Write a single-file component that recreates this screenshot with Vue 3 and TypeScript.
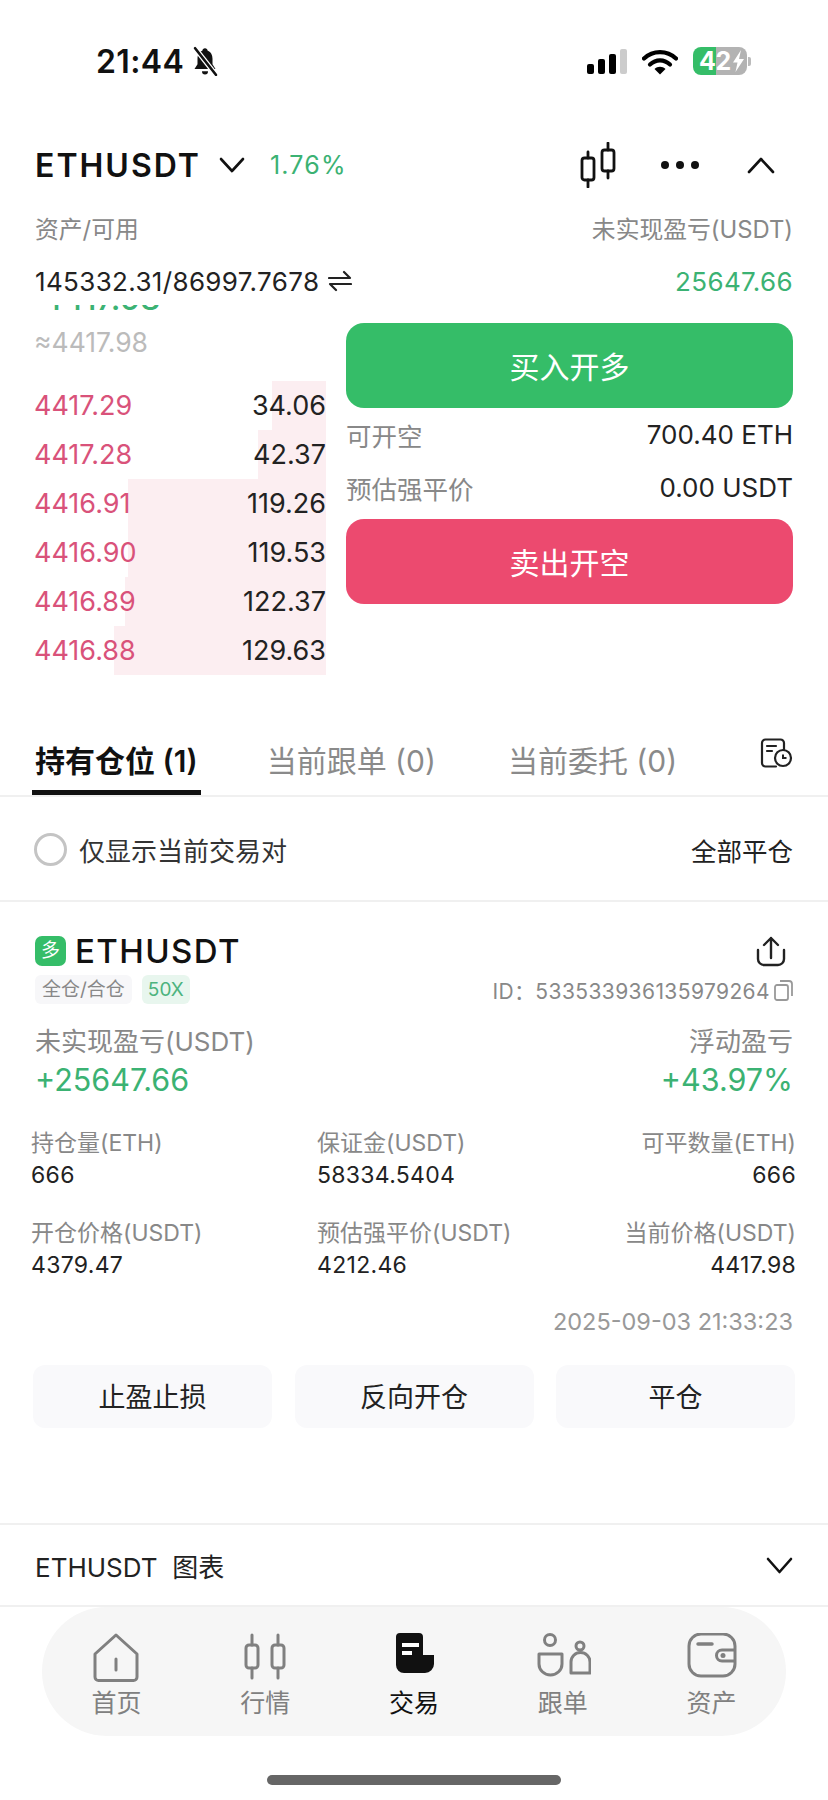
<script setup lang="ts">
interface Level {
  price: string;
  size: string;
  depth: number;
}

interface Metric {
  label: string;
  value: string;
}

const levels: Level[] = [
  { price: "4417.29", size: "34.06", depth: 54 },
  { price: "4417.28", size: "42.37", depth: 68 },
  { price: "4416.91", size: "119.26", depth: 198 },
  { price: "4416.90", size: "119.53", depth: 198 },
  { price: "4416.89", size: "122.37", depth: 201 },
  { price: "4416.88", size: "129.63", depth: 212 },
];

const metrics: Metric[] = [
  { label: "持仓量(ETH)", value: "666" },
  { label: "保证金(USDT)", value: "58334.5404" },
  { label: "可平数量(ETH)", value: "666" },
  { label: "开仓价格(USDT)", value: "4379.47" },
  { label: "预估强平价(USDT)", value: "4212.46" },
  { label: "当前价格(USDT)", value: "4417.98" },
];

const actions = ["止盈止损", "反向开仓", "平仓"];

const navItems = [
  { key: "home", label: "首页" },
  { key: "market", label: "行情" },
  { key: "trade", label: "交易" },
  { key: "copy", label: "跟单" },
  { key: "assets", label: "资产" },
];
</script>

<template>
  <div class="page">
    <div class="status">
      <div class="status-left">
        <span class="time">21:44</span>
        <svg class="bell" width="28" height="30" viewBox="0 0 28 28" preserveAspectRatio="none">
          <path d="M14 2c-1.500 0-2.500 1-2.700 2.500C8 5.500 6.500 8.500 6.500 12v5L3.500 21.500h21L21.500 17v-5c0-3.500-1.500-6.500-4.800-7.500C16.500 3 15.500 2 14 2z" fill="#111" />
          <path d="M11 23.500h6a3 3 0 0 1-6 0z" fill="#111" />
          <path d="M4 2l21 25" stroke="#fff" stroke-width="5" />
          <path d="M4 2l21 25" stroke="#111" stroke-width="2.400" stroke-linecap="round" />
        </svg>
      </div>
      <div class="status-right">
        <div class="signal">
          <i style="height: 10px"></i>
          <i style="height: 15px"></i>
          <i style="height: 20px"></i>
          <i class="off" style="height: 25px"></i>
        </div>
        <svg width="36" height="27" viewBox="0 0 36 27">
          <path d="M2 10.500C11 2 25 2 34 10.500" fill="none" stroke="#000" stroke-width="4.200" stroke-linecap="round" />
          <path d="M8 16.500c6-5.500 14-5.500 20 0" fill="none" stroke="#000" stroke-width="4.200" stroke-linecap="round" />
          <path d="M12.500 21L18 26.500 23.500 21c-3-3-8-3-11 0z" fill="#000" />
        </svg>
        <div class="battery">
          <span class="battery-level">42</span>
          <svg width="13" height="22" viewBox="0 0 13 22"><path d="M9 0L1 12.500h4.500L3.500 22 12 9H7z" fill="#fff" /></svg>
        </div>
        <span class="battery-cap"></span>
      </div>
    </div>

    <div class="head">
      <span class="symbol">ETHUSDT</span>
      <svg class="symbol-arrow" width="26" height="16" viewBox="0 0 26 16">
        <path d="M2 2l11 12L24 2" fill="none" stroke="#111" stroke-width="2.600" stroke-linecap="round" stroke-linejoin="round" />
      </svg>
      <span class="change">1.76%</span>
      <svg class="candle" width="36" height="46" viewBox="0 0 36 46">
        <g fill="none" stroke="#111" stroke-width="2.800" stroke-linecap="round">
          <path d="M8 10v6M8 38v7M28 1v7M28 29v7" />
          <rect x="2" y="16" width="12" height="22" rx="2.500" />
          <rect x="22" y="8" width="12" height="21" rx="2.500" />
        </g>
      </svg>
      <div class="dots"><i></i><i></i><i></i></div>
      <svg width="28" height="17" viewBox="0 0 28 17">
        <path d="M2 15L14 2l12 13" fill="none" stroke="#111" stroke-width="2.600" stroke-linecap="round" stroke-linejoin="round" />
      </svg>
    </div>

    <div class="account">
      <div class="account-row label">
        <span>资产/可用</span>
        <span>未实现盈亏(USDT)</span>
      </div>
      <div class="account-row values">
        <span class="balance">
          145332.31/86997.7678
          <svg width="24" height="22" viewBox="0 0 24 22">
            <path d="M1 8h21l-6-6M23 14H2l6 6" fill="none" stroke="#222" stroke-width="2.200" stroke-linecap="round" stroke-linejoin="round" />
          </svg>
        </span>
        <span class="green">25647.66</span>
      </div>
    </div>

    <div class="body">
      <div class="book">
        <div class="last-price"><span>4417.98</span></div>
        <div class="index-price">≈4417.98</div>
        <div v-for="level in levels" :key="level.price" class="level">
          <span class="depth" :style="{ width: level.depth + 'px' }"></span>
          <span class="level-price">{{ level.price }}</span>
          <span class="level-size">{{ level.size }}</span>
        </div>
      </div>
      <div class="order">
        <button class="order-btn buy">买入开多</button>
        <div class="order-info">
          <div class="order-row"><span>可开空</span><b>700.40 ETH</b></div>
          <div class="order-row"><span>预估强平价</span><b>0.00 USDT</b></div>
        </div>
        <button class="order-btn sell">卖出开空</button>
      </div>
    </div>

    <div class="tabs">
      <span class="tab active">持有仓位 (1)</span>
      <span class="tab">当前跟单 (0)</span>
      <span class="tab">当前委托 (0)</span>
      <svg class="history" width="33" height="30" viewBox="0 0 33 30">
        <path d="M24 12V5a3.500 3.500 0 0 0-3.500-3.500h-15A3.500 3.500 0 0 0 2 5v20a3.500 3.500 0 0 0 3.500 3.500H16" fill="none" stroke="#222" stroke-width="2.200" stroke-linecap="round" />
        <path d="M7 8h9M7 13h5" stroke="#222" stroke-width="2.200" stroke-linecap="round" />
        <circle cx="23" cy="20" r="8" fill="#fff" stroke="#222" stroke-width="2.200" />
        <path d="M23 16.500V20h3.500" fill="none" stroke="#222" stroke-width="2" />
      </svg>
    </div>

    <div class="filter">
      <span class="radio"></span>
      <span class="filter-text">仅显示当前交易对</span>
      <span class="close-all">全部平仓</span>
    </div>

    <div class="position">
      <div class="pos-title">
        <span class="side">多</span>
        <span class="pos-symbol">ETHUSDT</span>
        <svg class="share" width="30" height="31" viewBox="0 0 30 31">
          <path d="M15 2v20M8 9l7-7 7 7" fill="none" stroke="#222" stroke-width="2.400" stroke-linecap="round" stroke-linejoin="round" />
          <path d="M2 14v9a6 6 0 0 0 6 6h14a6 6 0 0 0 6-6v-9" fill="none" stroke="#222" stroke-width="2.400" stroke-linecap="round" />
        </svg>
      </div>
      <div class="pos-tags">
        <span class="tag">全仓/合仓</span>
        <span class="tag lev">50X</span>
        <span class="pos-id">ID：533533936135979264</span>
        <svg width="19" height="22" viewBox="0 0 19 22">
          <rect x="1" y="6" width="13" height="15" rx="2" fill="none" stroke="#999" stroke-width="1.800" />
          <path d="M6 2h9a3 3 0 0 1 3 3v12" fill="none" stroke="#999" stroke-width="1.800" />
        </svg>
      </div>

      <div class="pnl">
        <div>
          <div class="pnl-label">未实现盈亏(USDT)</div>
          <div class="pnl-value">+25647.66</div>
        </div>
        <div class="right">
          <div class="pnl-label">浮动盈亏</div>
          <div class="pnl-value">+43.97%</div>
        </div>
      </div>

      <div class="metrics">
        <div v-for="m in metrics" :key="m.label" class="metric">
          <div class="metric-label">{{ m.label }}</div>
          <div class="metric-value">{{ m.value }}</div>
        </div>
      </div>

      <div class="opened">2025-09-03 21:33:23</div>

      <div class="actions">
        <button v-for="a in actions" :key="a" class="action">{{ a }}</button>
      </div>
    </div>

    <div class="chart-row">
      <span class="chart-title">ETHUSDT&nbsp;&nbsp;图表</span>
      <svg width="27" height="17" viewBox="0 0 27 17">
        <path d="M2 2l11.500 13L25 2" fill="none" stroke="#111" stroke-width="2.600" stroke-linecap="round" stroke-linejoin="round" />
      </svg>
    </div>

    <div class="nav">
      <div v-for="item in navItems" :key="item.key" class="nav-item" :class="{ current: item.key === 'trade' }">
        <svg v-if="item.key === 'home'" width="56" height="50" viewBox="0 0 56 50">
          <path d="M28 2L49 21V44a3.500 3.500 0 0 1-3.500 3.500h-35A3.500 3.500 0 0 1 7 44V21z" fill="none" stroke="#808080" stroke-width="3" stroke-linejoin="round" />
          <path d="M28 26v11" stroke="#808080" stroke-width="3" stroke-linecap="round" />
        </svg>
        <svg v-else-if="item.key === 'market'" width="56" height="50" viewBox="0 0 56 50">
          <g fill="none" stroke="#808080" stroke-width="3" stroke-linecap="round">
            <path d="M15 2v10M15 35v10M41 2v10M41 35v10" />
            <rect x="9" y="12" width="12" height="23" rx="3" />
            <rect x="35" y="12" width="12" height="23" rx="3" />
          </g>
        </svg>
        <svg v-else-if="item.key === 'trade'" width="56" height="50" viewBox="0 0 56 50">
          <path d="M14 0H33a4 4 0 0 1 4 4V22H48V31a9 9 0 0 1-9 9H18a8 8 0 0 1-8-8V4a4 4 0 0 1 4-4z" fill="#111" />
          <path d="M16 10h17v4H16zM16 18h10v4H16z" fill="#fff" />
        </svg>
        <svg v-else-if="item.key === 'copy'" width="56" height="50" viewBox="0 0 56 50">
          <g fill="none" stroke="#808080" stroke-width="3" stroke-linejoin="round">
            <circle cx="15" cy="7" r="5.500" />
            <path d="M4 21H27V31A11.500 11 0 0 1 4 31z" />
            <circle cx="45" cy="13" r="4" />
            <path d="M36 40V29a9.500 9.500 0 0 1 19 0V40z" />
          </g>
        </svg>
        <svg v-else width="56" height="50" viewBox="0 0 56 50">
          <rect x="5" y="1" width="46" height="42" rx="12" fill="none" stroke="#808080" stroke-width="3" />
          <path d="M14 11h14" stroke="#808080" stroke-width="3.500" stroke-linecap="round" />
          <path d="M51 17H38a5.500 5.500 0 0 0 0 11H51" fill="none" stroke="#808080" stroke-width="3" />
          <circle cx="39" cy="22.500" r="2.500" fill="#808080" />
        </svg>
        <span class="nav-label">{{ item.label }}</span>
      </div>
    </div>

    <div class="home-bar"></div>
  </div>
</template>

<style>
body {
  background: #fff;
}
</style>

<style scoped>
.page {
  width: 828px;
  height: 1800px;
  overflow: hidden;
  background: #fff;
  color: #222;
  font-family: Inter, "Noto Sans CJK SC", sans-serif;
}

.status {
  height: 122px;
  display: flex;
  align-items: center;
  justify-content: space-between;
  padding: 0 77px 0 96px;
  box-sizing: border-box;
}

.status-left,
.status-right {
  display: flex;
  align-items: center;
}

.time {
  font-size: 32px;
  font-weight: 600;
  color: #111;
  letter-spacing: 0.4px;
}

.bell {
  margin-left: 7px;
}

.signal {
  display: flex;
  align-items: flex-end;
  gap: 4px;
  margin-right: 15px;
}

.signal i {
  display: block;
  width: 7px;
  border-radius: 2px;
  background: #000;
}

.signal i.off {
  background: #ccc;
}

.battery {
  width: 54px;
  height: 28px;
  margin-left: 15px;
  padding-left: 6px;
  box-sizing: border-box;
  border-radius: 8px;
  background: linear-gradient(90deg, #35bd68 43%, #b3b3b3 43%);
  color: #fff;
  font-size: 25px;
  font-weight: 700;
  line-height: 28px;
  display: flex;
  align-items: center;
  gap: 1px;
}

.battery-level {
  letter-spacing: -0.5px;
}

.battery-cap {
  width: 3px;
  height: 9px;
  margin-left: 1px;
  border-radius: 0 2px 2px 0;
  background: #bbb;
}

.head {
  height: 86px;
  display: flex;
  align-items: center;
  padding: 0 53px 0 35px;
}

.symbol {
  font-size: 32px;
  font-weight: 600;
  color: #111;
  letter-spacing: 2px;
}

.symbol-arrow {
  margin-left: 18px;
}

.change {
  margin-left: 25px;
  font-size: 25px;
  letter-spacing: 1.200px;
  color: #3bb273;
}

.candle {
  margin-left: auto;
}

.dots {
  display: flex;
  gap: 7px;
  margin: 0 48px 0 45px;
}

.dots i {
  width: 8px;
  height: 8px;
  border-radius: 50%;
  background: #111;
}

.account {
  padding: 0 35px;
}

.account-row {
  display: flex;
  justify-content: space-between;
  align-items: center;
}

.account-row.label {
  height: 30px;
  margin-top: 4px;
  font-size: 23.800px;
  color: #888;
}

.account-row.values {
  height: 40px;
  margin-top: 19px;
  font-size: 26px;
  letter-spacing: 0.350px;
}

.balance {
  display: flex;
  align-items: center;
  gap: 9px;
}

.green {
  color: #3bb273;
}

.body {
  display: flex;
  height: 375px;
  padding: 0 35px 0 0;
}

.book {
  width: 346px;
  flex: none;
  box-sizing: border-box;
  padding: 0 20px 0 34px;
}

.last-price {
  height: 6px;
  margin-top: 4px;
  overflow: hidden;
  display: flex;
  align-items: flex-end;
  padding-left: 8px;
  color: #3bb273;
  font-size: 32px;
  font-weight: 500;
  line-height: 24px;
}

.index-price {
  height: 70px;
  padding-top: 17px;
  box-sizing: border-box;
  font-size: 26.500px;
  line-height: 28px;
  color: #bbb;
}

.level {
  position: relative;
  height: 49px;
  display: flex;
  align-items: center;
  justify-content: space-between;
  font-size: 27px;
}

.depth {
  position: absolute;
  top: 0;
  right: 0;
  bottom: 0;
  background: #fceef1;
}

.level-price {
  position: relative;
  color: #d9527a;
}

.level-size {
  position: relative;
  color: #222;
}

.order {
  flex: 1;
  padding-top: 22px;
}

.order-btn {
  display: block;
  width: 100%;
  height: 85px;
  padding-bottom: 3px;
  border: none;
  border-radius: 18px;
  color: #fff;
  font-family: inherit;
  font-size: 30px;
}

.buy {
  background: #35bd68;
}

.sell {
  background: #ec4a6f;
}

.order-info {
  padding: 0 0 5px;
}

.order-row {
  height: 53px;
  display: flex;
  align-items: center;
  justify-content: space-between;
  font-size: 25.500px;
  color: #888;
}

.order-row b {
  font-weight: 400;
  font-size: 26px;
  color: #222;
}

.tabs {
  height: 121px;
  box-sizing: border-box;
  padding: 50px 35px 0 32px;
  display: flex;
  align-items: flex-start;
  border-bottom: 2px solid #f0f0f0;
}

.tab {
  height: 69px;
  padding: 13px 3px 0;
  margin-right: 63px;
  box-sizing: border-box;
  line-height: 44px;
  font-size: 30px;
  color: #8a8a8a;
}

.tab:nth-child(2) {
  margin-right: 66px;
}

.tab.active {
  color: #111;
  font-weight: 600;
  border-bottom: 5px solid #111;
}

.history {
  margin-left: auto;
  margin-top: 12px;
}

.filter {
  height: 105px;
  box-sizing: border-box;
  padding: 1px 35px 0 34px;
  display: flex;
  align-items: center;
  border-bottom: 2px solid #f0f0f0;
}

.radio {
  width: 33px;
  height: 33px;
  box-sizing: border-box;
  border: 3px solid #c4c4c4;
  border-radius: 50%;
}

.filter-text {
  margin-left: 12px;
  font-size: 26px;
  color: #333;
}

.close-all {
  margin-left: auto;
  font-size: 25.500px;
  color: #222;
}

.position {
  padding: 34px 35px 0 35px;
}

.pos-title {
  height: 30px;
  display: flex;
  align-items: center;
}

.side {
  width: 31px;
  height: 30px;
  border-radius: 7px;
  background: #35bd68;
  color: #fff;
  font-size: 19px;
  line-height: 30px;
  text-align: center;
}

.pos-symbol {
  margin-left: 9px;
  font-size: 33px;
  font-weight: 500;
  color: #111;
  letter-spacing: 1.400px;
}

.share {
  margin-left: auto;
  margin-right: 7px;
}

.pos-tags {
  height: 29px;
  margin-top: 9px;
  display: flex;
  align-items: center;
}

.tag {
  height: 29px;
  line-height: 29px;
  padding: 0 7px;
  border-radius: 6px;
  background: #f7f7f9;
  color: #888;
  font-size: 19px;
}

.tag.lev {
  margin-left: 10px;
  padding: 0 6px;
  background: #e8f6ee;
  color: #4db37e;
}

.pos-id {
  margin-left: auto;
  margin-right: 4px;
  font-size: 21px;
  letter-spacing: 0.4px;
  color: #888;
}

.pnl {
  display: flex;
  justify-content: space-between;
  margin-top: 23px;
}

.right {
  text-align: right;
}

.pnl-label {
  height: 30px;
  line-height: 30px;
  font-size: 26px;
  color: #888;
}

.pnl-value {
  height: 38px;
  line-height: 38px;
  margin-top: 4px;
  font-size: 30.500px;
  color: #3bb273;
}

.metrics {
  display: grid;
  grid-template-columns: 286px 1fr 1fr;
  row-gap: 28px;
  margin: 29px -3px 0 -4px;
}

.metric:nth-child(3n) {
  text-align: right;
}

.metric-label {
  height: 30px;
  line-height: 30px;
  font-size: 23px;
  color: #888;
}

.metric-value {
  height: 30px;
  line-height: 30px;
  margin-top: 2px;
  font-size: 23px;
  letter-spacing: 0.3px;
  color: #222;
}

.opened {
  height: 30px;
  line-height: 30px;
  margin-top: 27px;
  text-align: right;
  font-size: 23.500px;
  color: #999;
}

.actions {
  display: grid;
  grid-template-columns: repeat(3, 239px);
  justify-content: space-between;
  margin: 28px -2px 0;
}

.action {
  height: 63px;
  padding-bottom: 4px;
  border: none;
  border-radius: 12px;
  background: #f9f9fb;
  color: #222;
  font-family: inherit;
  font-size: 27px;
}

.chart-row {
  height: 84px;
  box-sizing: border-box;
  margin-top: 95px;
  padding: 0 35px;
  display: flex;
  align-items: center;
  justify-content: space-between;
  border-top: 2px solid #f0f0f0;
  border-bottom: 2px solid #f0f0f0;
}

.chart-title {
  font-size: 26px;
  color: #222;
}

.nav {
  height: 129px;
  margin: 0 42px;
  display: grid;
  grid-template-columns: repeat(5, 1fr);
  background: #f6f6f6;
  border-radius: 66px;
}

.nav-item {
  padding-top: 26px;
  display: flex;
  flex-direction: column;
  align-items: center;
}

.nav-label {
  height: 34px;
  line-height: 34px;
  margin-top: 3px;
  font-size: 25px;
  color: #808080;
}

.nav-item.current .nav-label {
  color: #111;
}

.home-bar {
  width: 294px;
  height: 10px;
  margin: 39px auto 0;
  border-radius: 5px;
  background: #666;
}
</style>
